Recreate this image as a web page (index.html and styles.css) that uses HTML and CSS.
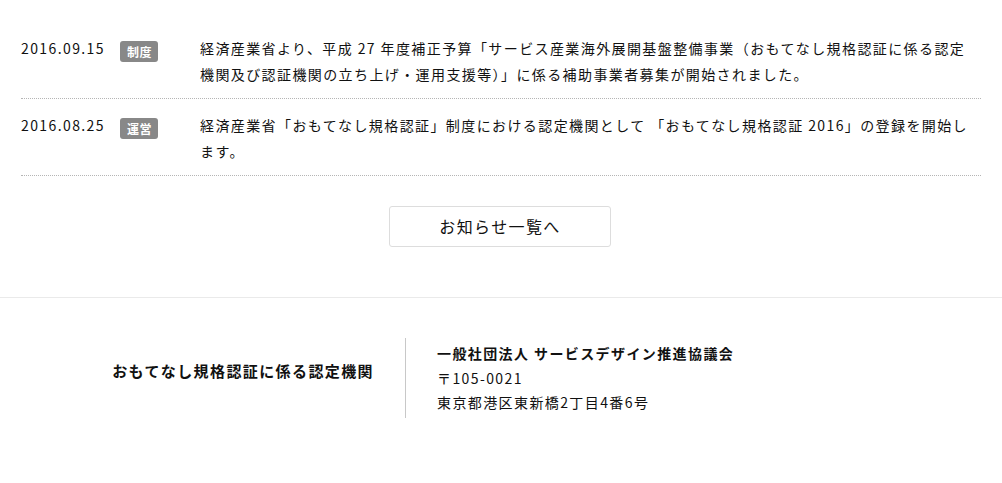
FILE: index.html
```html
<!DOCTYPE html>
<html lang="ja">
<head>
<meta charset="utf-8">
<title>お知らせ</title>
<link rel="stylesheet" href="styles.css">
</head>
<body>
<section class="news">
  <ul class="news-list">
    <li class="news-item">
      <span class="news-date">2016.09.15</span>
      <span class="news-cat"><span class="badge">制度</span></span>
      <p class="news-text">経済産業省より、平成 27 年度補正予算「サービス産業海外展開基盤整備事業（おもてなし規格認証に係る認定機関及び認証機関の立ち上げ・運用支援等）」に係る補助事業者募集が開始されました。</p>
    </li>
    <li class="news-item">
      <span class="news-date">2016.08.25</span>
      <span class="news-cat"><span class="badge">運営</span></span>
      <p class="news-text">経済産業省「おもてなし規格認証」制度における認定機関として 「おもてなし規格認証 2016」の登録を開始します。</p>
    </li>
  </ul>
  <div class="more">
    <a class="more-btn" href="#">お知らせ一覧へ</a>
  </div>
</section>
<footer class="footer">
  <div class="footer-inner">
    <div class="footer-left">
      <p class="footer-title">おもてなし規格認証に係る認定機関</p>
    </div>
    <div class="footer-right">
      <p class="org">一般社団法人 サービスデザイン推進協議会</p>
      <p>〒105-0021</p>
      <p>東京都港区東新橋2丁目4番6号</p>
    </div>
  </div>
</footer>
</body>
</html>
```

FILE: styles.css
```css
* { box-sizing: border-box; }
html, body { margin: 0; padding: 0; background: #fff; }
body {
  font-family: "Noto Sans CJK JP", "Noto Sans", sans-serif;
  font-size: 14px;
  color: #111;
  letter-spacing: 0.1em;
}
p { margin: 0; }

.news {
  padding-top: 22px;
  padding-bottom: 50px;
}
.news-list {
  list-style: none;
  margin: 0 auto;
  padding: 0;
  width: 960px;
}
.news-item {
  display: flex;
  align-items: flex-start;
  padding: 13px 0 11px;
  border-bottom: 1px dotted #b5b5b5;
  line-height: 26px;
}
.news-date {
  width: 99px;
  flex: none;
}
.news-cat {
  width: 80px;
  flex: none;
  padding-top: 6px;
  line-height: 0;
}
.badge {
  display: inline-block;
  background: #888;
  color: #fff;
  font-size: 12px;
  font-weight: bold;
  line-height: 21px;
  height: 21px;
  padding: 0 6px 0 7px;
  border-radius: 3px;
  letter-spacing: 0.05em;
}
.news-text {
  flex: 1;
  min-width: 0;
  padding-right: 10px;
}

.more {
  display: flex;
  justify-content: center;
  padding-top: 30px;
}
.more-btn {
  display: block;
  width: 222px;
  height: 41px;
  margin-left: -2px;
  border: 1px solid #ddd;
  border-radius: 3px;
  text-align: center;
  line-height: 39px;
  font-size: 16px;
  color: #111;
  text-decoration: none;
}

.footer {
  border-top: 1px solid #eaeaea;
  padding-top: 40px;
  padding-bottom: 60px;
}
.footer-inner {
  width: 960px;
  margin: 0 auto;
  display: flex;
  align-items: stretch;
}
.footer-left {
  width: 385px;
  flex: none;
  border-right: 1px solid #c8c8c8;
  padding: 20px 31px 0 0;
  text-align: right;
}
.footer-title {
  font-size: 15px;
  font-weight: bold;
  line-height: 25px;
}
.footer-right {
  padding: 3px 0 3px 31px;
  line-height: 24.5px;
}
.org { font-weight: bold; }
```
